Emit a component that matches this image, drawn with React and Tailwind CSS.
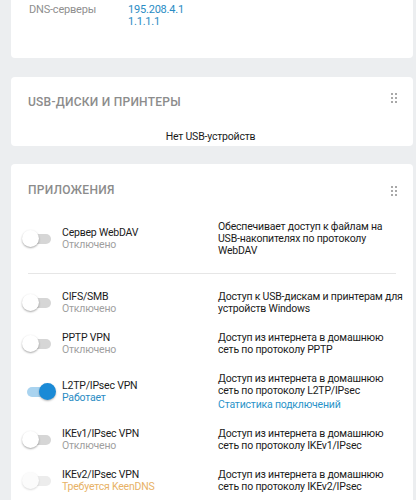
const apps = [
  {
    name: "Сервер WebDAV",
    status: "Отключено",
    tone: "off",
    desc: ["Обеспечивает доступ к файлам на", "USB-накопителях по протоколу", "WebDAV"],
  },
  {
    name: "CIFS/SMB",
    status: "Отключено",
    tone: "off",
    desc: ["Доступ к USB-дискам и принтерам для", "устройств Windows"],
  },
  {
    name: "PPTP VPN",
    status: "Отключено",
    tone: "off",
    desc: ["Доступ из интернета в домашнюю", "сеть по протоколу PPTP"],
  },
  {
    name: "L2TP/IPsec VPN",
    status: "Работает",
    tone: "on",
    desc: ["Доступ из интернета в домашнюю", "сеть по протоколу L2TP/IPsec"],
    link: "Статистика подключений",
  },
  {
    name: "IKEv1/IPsec VPN",
    status: "Отключено",
    tone: "off",
    desc: ["Доступ из интернета в домашнюю", "сеть по протоколу IKEv1/IPsec"],
  },
  {
    name: "IKEv2/IPsec VPN",
    status: "Требуется KeenDNS",
    tone: "warn",
    desc: ["Доступ из интернета в домашнюю", "сеть по протоколу IKEv2/IPsec"],
  },
];

const statusColor = {
  off: "text-[#a0a0a0]",
  on: "text-[#2a8cc4]",
  warn: "text-[#e8b266]",
};

const DragHandle = () => (
  <div className="grid grid-cols-2 gap-[2px]">
    {[0, 1, 2, 3, 4, 5].map((i) => (
      <span key={i} className="size-[2px] bg-[#a9a9a9]" />
    ))}
  </div>
);

const Toggle = ({ on, disabled }) => (
  <div className="relative w-[34px] h-[18px] flex items-center">
    <div
      className={`ml-[5px] w-[24px] h-[10px] rounded-full ${
        on ? "bg-[#a9d3ef]" : disabled ? "bg-[#ececec]" : "bg-[#d6d6d6]"
      }`}
    />
    <div
      className={`absolute top-0 size-[17px] rounded-full ${
        on
          ? "left-[17px] bg-[#1a8ad6] shadow-[0_1px_2px_rgba(0,0,0,0.3)]"
          : disabled
          ? "left-0 bg-[#fbfbfb] shadow-[0_1px_2px_rgba(0,0,0,0.15)]"
          : "left-0 bg-white shadow-[0_1px_2px_rgba(0,0,0,0.35)]"
      }`}
    />
  </div>
);

const App = () => {
  return (
    <div
      className="h-[500px] overflow-hidden bg-[#eceef0] pl-[11px] pr-[3px] text-[11px] leading-[12px] tracking-[-0.2px] text-[#1b1b1b] whitespace-nowrap"
      style={{ fontFamily: "Roboto, 'Liberation Sans', sans-serif" }}
    >
      {/* DNS card (cut off) */}
      <div className="bg-white rounded-b-[4px] pt-[4px] pb-[30px] pl-[18px] flex">
        <div className="w-[99px] text-[#8f8f8f]">DNS-серверы</div>
        <div className="text-[#2a8cc4]">
          <div>195.208.4.1</div>
          <div>1.1.1.1</div>
        </div>
      </div>

      {/* USB */}
      <div className="mt-[19px] bg-white rounded-[4px] pt-[17px] pb-[3px] pl-[17px] pr-[16px]">
        <div className="flex items-start justify-between">
          <h2 className="text-[12px] leading-[16px] font-medium tracking-[0.25px] text-[#8c8c8c]">
            USB-ДИСКИ И ПРИНТЕРЫ
          </h2>
          <div className="mt-[-1px]">
            <DragHandle />
          </div>
        </div>
        <p className="mt-[21px] text-center pr-[4px] text-[10.5px]">Нет USB-устройств</p>
      </div>

      {/* Apps */}
      <div className="mt-[18px] bg-white rounded-[4px] pt-[18px] pb-[10px]">
        <div className="flex items-start justify-between pl-[17px] pr-[16px]">
          <h2 className="text-[12px] leading-[16px] font-medium tracking-[0.25px] text-[#8c8c8c]">
            ПРИЛОЖЕНИЯ
          </h2>
          <div className="mt-[4px]">
            <DragHandle />
          </div>
        </div>

        <div className="mt-[23px] flex flex-col text-[10.5px]">
          {apps.map((app, idx) => (
            <div key={app.name}>
              <div className="flex items-center pl-[11px] pr-[15px]">
                <div className="w-[40px] shrink-0">
                  <Toggle on={app.tone === "on"} disabled={app.tone === "warn"} />
                </div>
                <div className="w-[156px] shrink-0">
                  <div>{app.name}</div>
                  <div className={statusColor[app.tone]}>{app.status}</div>
                </div>
                <div className="flex-1 min-w-0">
                  {app.desc.map((line) => (
                    <div key={line}>{line}</div>
                  ))}
                  {app.link && (
                    <div className="mt-[2px] text-[#2a93c9]">{app.link}</div>
                  )}
                </div>
              </div>
              {idx === 0 ? (
                <div className="mx-[17px] mt-[16px] mb-[17px] border-t border-[#e6e6e6]" />
              ) : (
                idx < apps.length - 1 && <div className="h-[17px]" />
              )}
            </div>
          ))}
        </div>
      </div>
    </div>
  );
};

export default App;
